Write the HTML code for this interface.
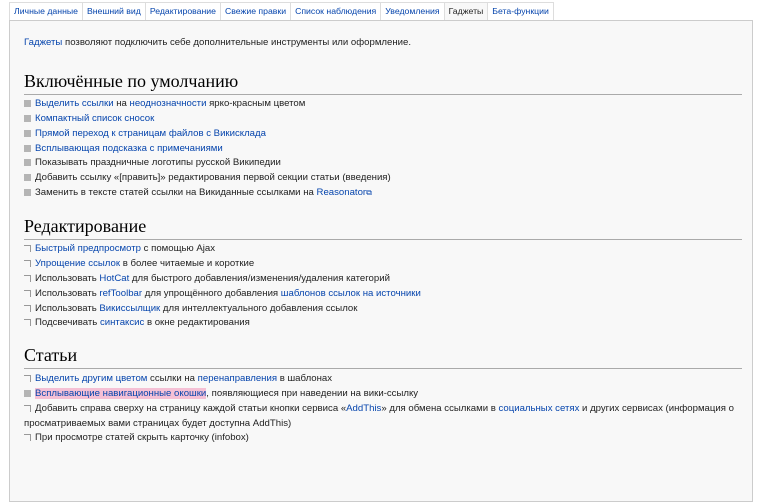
<!DOCTYPE html><html><head><meta charset="utf-8"><style>
body{margin:0;width:760px;height:448px;overflow:hidden;background:#fff;font-family:"Liberation Sans",sans-serif;font-size:9.6px;color:#222}
a{color:#0645ad;text-decoration:none}
.tabs{position:absolute;left:9px;top:2px;height:18px;display:flex}
.tab{height:17px;line-height:17px;padding:0 4px;border:1px solid #ddd;border-bottom:none;margin-right:-1px;background:#fff;color:#0645ad;font-size:8.7px}
.tab.sel{background:#f8f8f8;color:#222;height:18px}
.panel{position:absolute;left:9px;top:20px;width:742px;height:480px;background:#f8f8f8;border:1px solid #ccc}
h2{position:absolute;left:24px;right:18px;margin:0;font-family:"Liberation Serif",serif;font-weight:normal;font-size:18px;color:#000;border-bottom:1px solid #aaa;height:24px;line-height:22px}
.r{position:absolute;left:24px;white-space:nowrap;line-height:14px}
.cb{display:inline-block;width:7px;height:7px;background:#999;margin-right:4px;vertical-align:-1px;opacity:.7}
.un{display:inline-block;width:7px;height:7px;border-top:1px solid #999;border-right:1px solid #999;box-sizing:border-box;margin-right:4px;vertical-align:-1px}
.hl{background:#f5c0d5}
</style></head><body>
<div class="tabs"><div class="tab">Личные данные</div><div class="tab">Внешний вид</div><div class="tab">Редактирование</div><div class="tab">Свежие правки</div><div class="tab">Список наблюдения</div><div class="tab">Уведомления</div><div class="tab sel">Гаджеты</div><div class="tab">Бета-функции</div></div>
<div class="panel"></div>
<div class="r" style="top:36px"><a>Гаджеты</a> позволяют подключить себе дополнительные инструменты или оформление.</div>
<h2 style="top:70px">Включённые по умолчанию</h2>
<div class="r" style="top:97px"><span class="cb"></span><a>Выделить ссылки</a> на <a>неоднозначности</a> ярко-красным цветом</div>
<div class="r" style="top:112px"><span class="cb"></span><a>Компактный список сносок</a></div>
<div class="r" style="top:127px"><span class="cb"></span><a>Прямой переход к страницам файлов с Викисклада</a></div>
<div class="r" style="top:142px"><span class="cb"></span><a>Всплывающая подсказка с примечаниями</a></div>
<div class="r" style="top:156px"><span class="cb"></span>Показывать праздничные логотипы русской Википедии</div>
<div class="r" style="top:171px"><span class="cb"></span>Добавить ссылку «[править]» редактирования первой секции статьи (введения)</div>
<div class="r" style="top:186px"><span class="cb"></span>Заменить в тексте статей ссылки на Викиданные ссылками на <a>Reasonator</a><span style="color:#0645ad;font-size:8px">⧉</span></div>
<h2 style="top:215px">Редактирование</h2>
<div class="r" style="top:242px"><span class="un"></span><a>Быстрый предпросмотр</a> с помощью Ajax</div>
<div class="r" style="top:257px"><span class="un"></span><a>Упрощение ссылок</a> в более читаемые и короткие</div>
<div class="r" style="top:272px"><span class="un"></span>Использовать <a>HotCat</a> для быстрого добавления/изменения/удаления категорий</div>
<div class="r" style="top:287px"><span class="un"></span>Использовать <a>refToolbar</a> для упрощённого добавления <a>шаблонов ссылок на источники</a></div>
<div class="r" style="top:302px"><span class="un"></span>Использовать <a>Викиссылщик</a> для интеллектуального добавления ссылок</div>
<div class="r" style="top:316px"><span class="un"></span>Подсвечивать <a>синтаксис</a> в окне редактирования</div>
<h2 style="top:344px">Статьи</h2>
<div class="r" style="top:372px"><span class="un"></span><a>Выделить другим цветом</a> ссылки на <a>перенаправления</a> в шаблонах</div>
<div class="r" style="top:387px"><span class="cb"></span><a class="hl">Всплывающие навигационные окошки</a>, появляющиеся при наведении на вики-ссылку</div>
<div class="r" style="top:402px"><span class="un"></span>Добавить справа сверху на страницу каждой статьи кнопки сервиса «<a>AddThis</a>» для обмена ссылками в <a>социальных сетях</a> и других сервисах (информация о</div>
<div class="r" style="top:417px">просматриваемых вами страницах будет доступна AddThis)</div>
<div class="r" style="top:431px"><span class="un"></span>При просмотре статей скрыть карточку (infobox)</div>
</body></html>
